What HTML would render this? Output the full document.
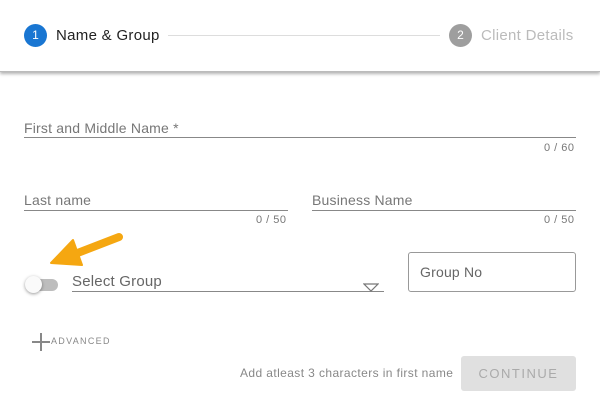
<!DOCTYPE html>
<html><head><style>
body{margin:0;width:600px;height:408px;background:#fff;font-family:"Liberation Sans",sans-serif;position:relative;overflow:hidden}
.hdr{position:absolute;left:0;top:0;width:600px;height:71px;background:#fff;box-shadow:0 2px 3px rgba(0,0,0,.3);border-bottom:1px solid #bbb}
.c{position:absolute;width:23px;height:23px;border-radius:50%;color:#fff;font-size:12px;text-align:center;line-height:23px}
.t{position:absolute;font-size:15px;letter-spacing:0.3px}
.lbl{position:absolute;font-size:14px;color:#777;letter-spacing:0.2px}
.ln{position:absolute;height:1px;background:#888}
.cnt{position:absolute;font-size:11px;color:#777;letter-spacing:0.5px}
</style></head><body>
<div class="hdr">
<div class="c" style="left:24px;top:24px;background:#1976d2">1</div>
<div class="t" style="left:56px;top:27px;color:#222">Name &amp; Group</div>
<div style="position:absolute;left:168px;top:35px;width:272px;height:1px;background:#ddd"></div>
<div class="c" style="left:449px;top:24px;background:#9e9e9e">2</div>
<div class="t" style="left:481px;top:27px;color:#bbb">Client Details</div>
</div>
<div class="lbl" style="left:24px;top:120px">First and Middle Name *</div>
<div class="ln" style="left:24px;top:137px;width:552px"></div>
<div class="cnt" style="left:544px;top:142px">0 / 60</div>
<div class="lbl" style="left:24px;top:192px">Last name</div>
<div class="ln" style="left:24px;top:210px;width:264px"></div>
<div class="cnt" style="left:256px;top:214px">0 / 50</div>
<div class="lbl" style="left:312px;top:192px">Business Name</div>
<div class="ln" style="left:312px;top:210px;width:264px"></div>
<div class="cnt" style="left:544px;top:214px">0 / 50</div>
<div style="position:absolute;left:33px;top:279px;width:25px;height:12px;border-radius:6px;background:#bdbdbd"></div>
<div style="position:absolute;left:25px;top:276px;width:17px;height:17px;border-radius:50%;background:#fafafa;box-shadow:0 1px 3px rgba(0,0,0,.4)"></div>
<div class="lbl" style="left:72px;top:273px;font-size:15px;color:#666">Select Group</div>
<div class="ln" style="left:72px;top:291px;width:312px"></div>
<svg style="position:absolute;left:363px;top:283px" width="16" height="9"><path d="M1 1H15L8 8Z" fill="none" stroke="#777" stroke-width="1.2"/></svg>
<div style="position:absolute;left:408px;top:252px;width:166px;height:38px;border:1px solid #999;border-radius:3px"></div>
<div class="lbl" style="left:420px;top:264px;font-size:14px;color:#666">Group No</div>
<svg style="position:absolute;left:0;top:220px" width="140" height="60"><g fill="#f5a711" stroke="#f5a711" stroke-linejoin="round" stroke-linecap="round"><path d="M119 17L75 34" stroke-width="8" fill="none"/><path d="M51 43L73 20L82 45Z" stroke-width="2"/></g></svg>
<svg style="position:absolute;left:31px;top:332px" width="20" height="20"><path d="M10 1V19M1 10H19" stroke="#888" stroke-width="2"/></svg>
<div style="position:absolute;left:51px;top:336px;font-size:9px;color:#888;letter-spacing:1.3px">ADVANCED</div>
<div style="position:absolute;left:240px;top:366px;font-size:12px;color:#888;letter-spacing:0.4px">Add atleast 3 characters in first name</div>
<div style="position:absolute;left:461px;top:356px;width:115px;height:35px;background:#e0e0e0;border-radius:3px;color:#aaa;font-size:13px;text-align:center;line-height:35px;letter-spacing:1.5px">CONTINUE</div>
</body></html>
